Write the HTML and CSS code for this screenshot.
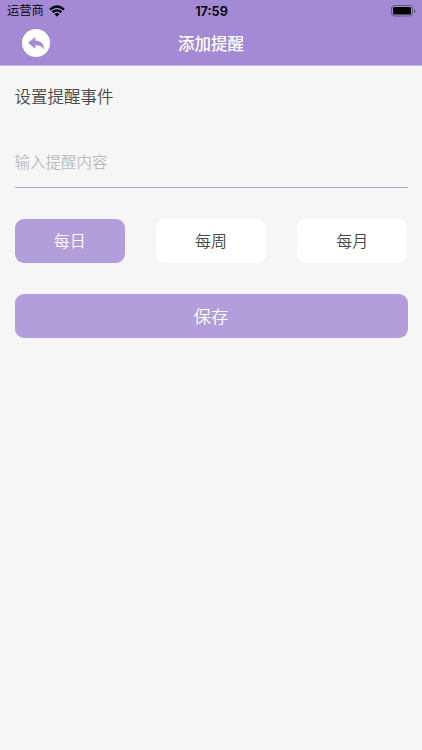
FILE: index.html
```html
<!DOCTYPE html>
<html lang="zh-CN">
<head>
  <meta charset="UTF-8">
  <meta name="viewport" content="width=device-width, initial-scale=1.0">
  <title>添加提醒</title>
  <link rel="stylesheet" href="styles.css">
</head>
<body>
  <header class="header">
    <div class="status">
      <div class="carrier">
        <span>运营商</span>
        <svg class="wifi" viewBox="0 0 16 12">
          <path d="M1 4.6Q8-1.6 15 4.6M3.5 7.2Q8 3.4 12.5 7.2" fill="none" stroke="#000" stroke-width="2.2"/>
          <path d="M5.4 9Q8 7 10.6 9L8 11.7Z"/>
        </svg>
      </div>
      <div class="time">17:59</div>
      <svg class="battery" viewBox="0 0 25 12">
        <rect x=".5" y=".5" width="21" height="10.5" rx="3" fill="none" stroke="#000" stroke-opacity=".4"/>
        <rect x="2" y="2" width="18" height="7.5" rx="1.5"/>
        <path d="M23 4v4q1.3-.6 1.3-2T23 4z" fill-opacity=".5"/>
      </svg>
    </div>
    <div class="nav">
      <button class="back" aria-label="返回">
        <svg viewBox="0 0 28 28">
          <path d="M6 13.8 13.3 8v3.5c5.5.1 8.8 3.4 8.8 9-2-3.1-4.6-4.4-8.8-4.2v3.5z"/>
        </svg>
      </button>
      <h1>添加提醒</h1>
    </div>
  </header>

  <main class="content">
    <h2>设置提醒事件</h2>
    <input class="text" type="text" placeholder="输入提醒内容">
    <div class="periods">
      <button class="btn active">每日</button>
      <button class="btn">每周</button>
      <button class="btn">每月</button>
    </div>
    <button class="btn active save">保存</button>
  </main>

  <script>
    const periods = document.querySelectorAll(".periods .btn");
    periods.forEach(btn => {
      btn.onclick = () => {
        periods.forEach(b => b.classList.remove("active"));
        btn.classList.add("active");
      };
    });
  </script>
</body>
</html>
```
FILE: styles.css
```css
* { box-sizing: border-box; }
body {
  margin: 0;
  min-height: 100vh;
  background: #f6f6f6;
  color: #484848;
  font-family: "Noto Sans CJK SC", sans-serif;
  font-weight: 350;
}
button, input {
  font-family: inherit;
  font-weight: inherit;
}
.header {
  height: 66px;
  background: #a48ad4;
  border-bottom: 1px solid #c5b5e3;
}
.status {
  display: grid;
  grid-template-columns: 1fr auto 1fr;
  align-items: center;
  height: 21px;
  padding: 0 6px 0 7px;
  color: #000;
}
.carrier {
  display: flex;
  align-items: center;
  gap: 5px;
  font-size: 12.3px;
  line-height: 21px;
}
.wifi { width: 16px; height: 12px; }
.time {
  padding-top: 2px;
  font: 600 12.8px/19px Inter, sans-serif;
}
.battery {
  width: 25px;
  height: 12px;
  justify-self: end;
}
.nav {
  display: grid;
  grid-template-columns: 28px 1fr 28px;
  align-items: center;
  height: 43px;
  padding: 0 22px;
}
.back {
  width: 28px;
  height: 28px;
  padding: 0;
  border: none;
  border-radius: 50%;
  background: #fff;
}
.back svg {
  display: block;
  fill: #a48ad4;
}
h1 {
  margin: 0;
  color: #fff;
  font-size: 16.5px;
  font-weight: 500;
  line-height: 42px;
  text-align: center;
}
.content { padding: 18px 14.5px 0; }
h2 {
  margin: 0;
  font-size: 16.5px;
  font-weight: 350;
  line-height: 24px;
}
.text {
  display: block;
  width: 100%;
  height: 52px;
  margin-top: 28px;
  padding: 0 0 2px;
  border: none;
  border-bottom: 1px solid #b39ddb;
  background: none;
  font-size: 15.5px;
  outline: none;
}
.text::placeholder { color: #bcbcbe; }
.periods {
  display: grid;
  grid-template-columns: repeat(3, 1fr);
  gap: 30.5px;
  margin: 30.5px 0;
}
.btn {
  height: 44.5px;
  padding: 0 0 1px;
  border: none;
  border-radius: 9px;
  background: #fff;
  color: #484848;
  font-size: 16px;
}
.active {
  background: #b39ddb;
  color: #fff;
}
.save {
  width: 100%;
  padding-bottom: 0;
  font-size: 17.5px;
}
```
